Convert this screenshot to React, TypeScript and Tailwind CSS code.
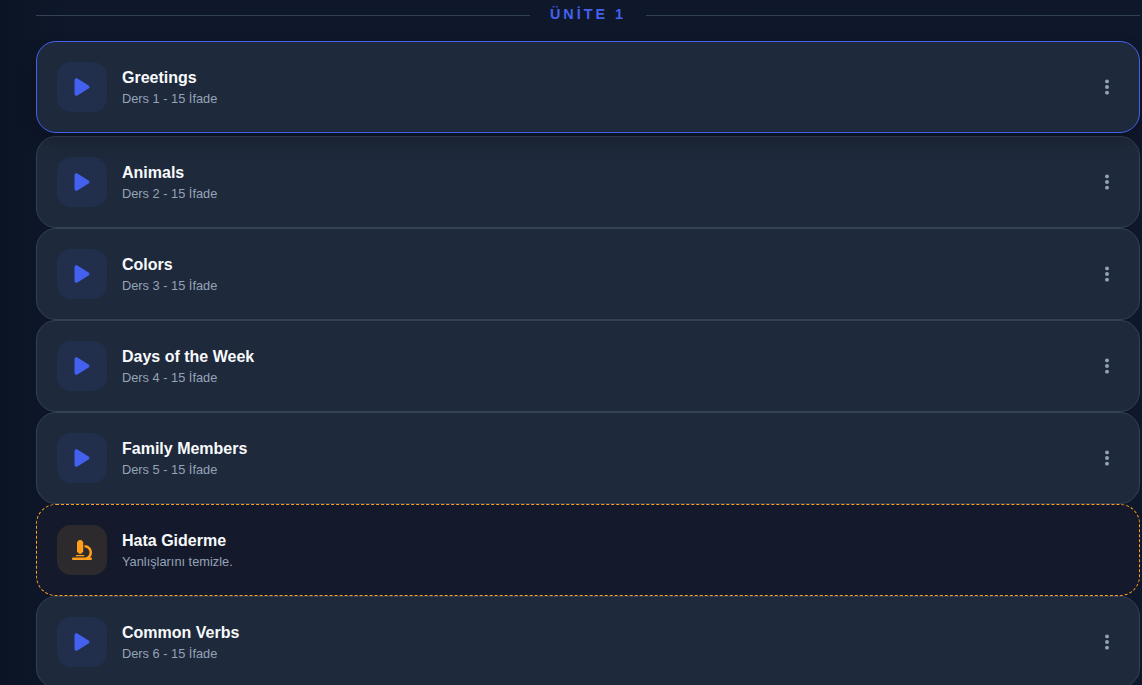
import { FaEllipsisVertical, FaMicroscope, FaPlay } from 'react-icons/fa6'

const LESSONS_BEFORE = [
  { title: 'Greetings', sub: 'Ders 1 - 15 İfade', active: true },
  { title: 'Animals', sub: 'Ders 2 - 15 İfade' },
  { title: 'Colors', sub: 'Ders 3 - 15 İfade' },
  { title: 'Days of the Week', sub: 'Ders 4 - 15 İfade' },
  { title: 'Family Members', sub: 'Ders 5 - 15 İfade' },
]

function LessonCard({ title, sub, active }: { title: string; sub: string; active?: boolean }) {
  return (
    <div
      className={
        'flex shrink-0 items-center rounded-[20px] border bg-[#1e293b] p-5 ' +
        (active
          ? 'relative z-10 -translate-y-[3px] border-[#4361ee] shadow-[0_10px_20px_rgba(0,0,0,0.2)]'
          : 'border-[#334155]')
      }
    >
      <div className="flex h-[50px] w-[50px] items-center justify-center rounded-[14px] bg-[#212e4c] text-xl text-[#4361ee]">
        <FaPlay />
      </div>
      <div className="ml-[15px] flex-1 pt-[2px]">
        <div className="text-base leading-[21px] font-bold text-[#f8fafc]">{title}</div>
        <div className="text-[12.8px] leading-[21px] text-[#94a3b8]">{sub}</div>
      </div>
      <div className="mr-[3px] mb-px text-lg text-[#94a3b8]">
        <FaEllipsisVertical />
      </div>
    </div>
  )
}

export default function App() {
  return (
    <div className="h-[685px] overflow-hidden bg-gradient-to-r from-[#0b1325] from-0% to-[#0f172a] to-[6%] pl-[36px] pr-[2px] font-['Liberation_Sans',Arial,sans-serif]">
      <div className="flex h-[44px] items-start">
        <div className="mt-[15px] h-px flex-1 bg-[#334155]" />
        <div className="mx-5 text-[14.4px] leading-[29px] font-bold tracking-[3px] text-[#4361ee]">ÜNİTE 1</div>
        <div className="mt-[15px] h-px flex-1 bg-[#334155]" />
      </div>
      <div className="flex flex-col">
        {LESSONS_BEFORE.map((l) => (
          <LessonCard key={l.title} {...l} />
        ))}
        <div className="flex shrink-0 items-center rounded-[20px] border border-dashed border-[#ff9f1c] bg-[#141a2b] p-5">
          <div className="flex h-[50px] w-[50px] items-center justify-center rounded-[14px] bg-[#2d2a2e] text-xl text-[#ff9f1c]">
            <FaMicroscope />
          </div>
          <div className="ml-[15px] flex-1 pt-[2px]">
            <div className="text-base leading-[21px] font-bold text-[#f8fafc]">Hata Giderme</div>
            <div className="text-[12.8px] leading-[21px] text-[#94a3b8]">Yanlışlarını temizle.</div>
          </div>
        </div>
        <LessonCard title="Common Verbs" sub="Ders 6 - 15 İfade" />
      </div>
    </div>
  )
}
